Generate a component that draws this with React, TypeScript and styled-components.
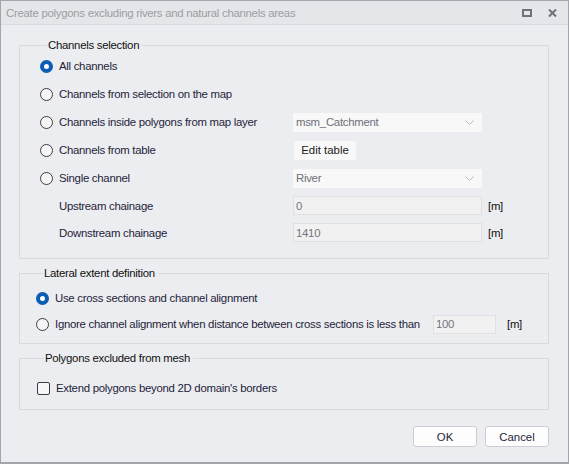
import React from 'react';
import styled, { createGlobalStyle } from 'styled-components';

const GlobalStyle = createGlobalStyle`
    html, body {
        margin: 0;
        padding: 0;
        background: #ecedf0;
    }
    body {
        font-family: 'Liberation Sans', Arial, sans-serif;
        font-size: 11.4px;
        letter-spacing: -0.28px;
        color: #1d1d3a;
    }
`;

const Window = styled.div`
    width: 569px;
    height: 464px;
    box-sizing: border-box;
    border: 1px solid #a3a5ad;
    border-bottom-width: 2px;
    background: #ecedf0;
    display: flex;
    flex-direction: column;
`;

const TitleBar = styled.div`
    height: 23px;
    flex: none;
    display: flex;
    align-items: center;
    padding: 0 6px 0 5px;
    background: #e5e6ea;
    border-bottom: 1px solid #d9dadf;
`;

const Title = styled.div`
    flex: 1;
    color: #9c9da3;
`;

const TitleButton = styled.div`
    width: 20px;
    height: 16px;
    display: flex;
    align-items: center;
    justify-content: center;
    margin-left: 5px;
`;

const Body = styled.div`
    flex: 1;
    display: flex;
    flex-direction: column;
    padding: 13px 19px 0 18px;
`;

const Group = styled.fieldset<{ $indent: number; $top: number; $bottom: number }>`
    margin: 0 0 7px;
    padding: ${(p) => p.$top}px 0 ${(p) => p.$bottom}px ${(p) => p.$indent}px;
    border: 1px solid #d9dadd;
    min-width: 0;
`;

const Legend = styled.legend`
    padding: 0 3px 0 1px;
    margin-left: 7px;
    line-height: 14px;
    color: #111;
`;

const Row = styled.div<{ $h?: number }>`
    height: ${(p) => p.$h ?? 28}px;
    display: flex;
    align-items: center;
`;

const Option = styled.label`
    display: flex;
    align-items: center;
    gap: 6px;
    white-space: nowrap;
`;

const RadioMark = styled.span<{ $on?: boolean }>`
    width: 13px;
    height: 13px;
    box-sizing: border-box;
    border-radius: 50%;
    flex: none;
    border: ${(p) => (p.$on ? '4px solid #0b5cb3' : '1px solid #3c3c44')};
    background: ${(p) => (p.$on ? '#fff' : '#f6f6f7')};
`;

const CheckMark = styled.span`
    width: 13px;
    height: 13px;
    box-sizing: border-box;
    border: 1px solid #3c3c44;
    border-radius: 2px;
    background: #f6f6f7;
    flex: none;
`;

const LabelCell = styled.div<{ $w: number; $pad?: number }>`
    width: ${(p) => p.$w}px;
    padding-left: ${(p) => p.$pad ?? 0}px;
    box-sizing: border-box;
    flex: none;
    white-space: nowrap;
`;

const Combo = styled.div`
    width: 189px;
    height: 19px;
    box-sizing: border-box;
    background: #f8f8f9;
    display: flex;
    align-items: center;
    padding: 0 8px 0 3px;
    color: #6e6e78;
    justify-content: space-between;
`;

const Field = styled.div<{ $w?: number }>`
    width: ${(p) => p.$w ?? 189}px;
    height: 19px;
    box-sizing: border-box;
    border: 1px solid #e0e0e3;
    background: #f1f1f2;
    display: flex;
    align-items: center;
    padding-left: 2px;
    color: #74747c;
`;

const Unit = styled.span<{ $gap: number }>`
    margin-left: ${(p) => p.$gap}px;
    color: #111;
`;

const SmallButton = styled.button`
    width: 62px;
    height: 19px;
    margin-left: 1px;
    border: none;
    border-radius: 2px;
    background: #f8f8f9;
    font: inherit;
    color: #1a1a1a;
    padding: 0;
`;

const Footer = styled.div`
    display: flex;
    justify-content: flex-end;
    gap: 8px;
    margin-top: 9px;
`;

const DialogButton = styled.button`
    width: 64px;
    height: 21px;
    border: 1px solid #cdced3;
    border-radius: 3px;
    background: #fdfdfd;
    font: inherit;
    color: #1d1d3a;
    padding: 0;
`;

const Chevron = () => (
    <svg width="9" height="5" viewBox="0 0 9 5">
        <path d="M0.5 0.5 L4.5 4.5 L8.5 0.5" fill="none" stroke="#b6b6bc" strokeWidth="1" />
    </svg>
);

const Radio: React.FC<{ on?: boolean; children: React.ReactNode }> = ({ on, children }) => (
    <Option>
        <RadioMark $on={on} />
        {children}
    </Option>
);

const App: React.FC = () => {
    return (
        <>
            <GlobalStyle />
            <Window>
                <TitleBar>
                    <Title>Create polygons excluding rivers and natural channels areas</Title>
                    <TitleButton>
                        <svg width="10" height="8" viewBox="0 0 10 8">
                            <rect x="1" y="1" width="8" height="6" fill="none" stroke="#6f7079" strokeWidth="2" />
                        </svg>
                    </TitleButton>
                    <TitleButton>
                        <svg width="9" height="8" viewBox="0 0 9 8">
                            <path d="M1 0.5 L8 7.5 M8 0.5 L1 7.5" stroke="#6f7079" strokeWidth="2" />
                        </svg>
                    </TitleButton>
                </TitleBar>
                <Body>
                    <Group $indent={20} $top={0} $bottom={12}>
                        <Legend>Channels selection</Legend>
                        <Row>
                            <Radio on>All channels</Radio>
                        </Row>
                        <Row>
                            <Radio>Channels from selection on the map</Radio>
                        </Row>
                        <Row>
                            <LabelCell $w={253}>
                                <Radio>Channels inside polygons from map layer</Radio>
                            </LabelCell>
                            <Combo>
                                msm_Catchment
                                <Chevron />
                            </Combo>
                        </Row>
                        <Row>
                            <LabelCell $w={253}>
                                <Radio>Channels from table</Radio>
                            </LabelCell>
                            <SmallButton>Edit table</SmallButton>
                        </Row>
                        <Row>
                            <LabelCell $w={253}>
                                <Radio>Single channel</Radio>
                            </LabelCell>
                            <Combo>
                                River
                                <Chevron />
                            </Combo>
                        </Row>
                        <Row $h={27}>
                            <LabelCell $w={253} $pad={19}>
                                Upstream chainage
                            </LabelCell>
                            <Field>0</Field>
                            <Unit $gap={6}>[m]</Unit>
                        </Row>
                        <Row $h={27}>
                            <LabelCell $w={253} $pad={19}>
                                Downstream chainage
                            </LabelCell>
                            <Field>1410</Field>
                            <Unit $gap={6}>[m]</Unit>
                        </Row>
                    </Group>
                    <Group $indent={16} $top={5} $bottom={6}>
                        <Legend>Lateral extent definition</Legend>
                        <Row $h={26}>
                            <Radio on>Use cross sections and channel alignment</Radio>
                        </Row>
                        <Row $h={26}>
                            <LabelCell $w={397}>
                                <Radio>Ignore channel alignment when distance between cross sections is less than</Radio>
                            </LabelCell>
                            <Field $w={63}>100</Field>
                            <Unit $gap={11}>[m]</Unit>
                        </Row>
                    </Group>
                    <Group $indent={17} $top={10} $bottom={8}>
                        <Legend>Polygons excluded from mesh</Legend>
                        <Row $h={26}>
                            <Option>
                                <CheckMark />
                                Extend polygons beyond 2D domain's borders
                            </Option>
                        </Row>
                    </Group>
                    <Footer>
                        <DialogButton>OK</DialogButton>
                        <DialogButton>Cancel</DialogButton>
                    </Footer>
                </Body>
            </Window>
        </>
    );
};

export default App;
